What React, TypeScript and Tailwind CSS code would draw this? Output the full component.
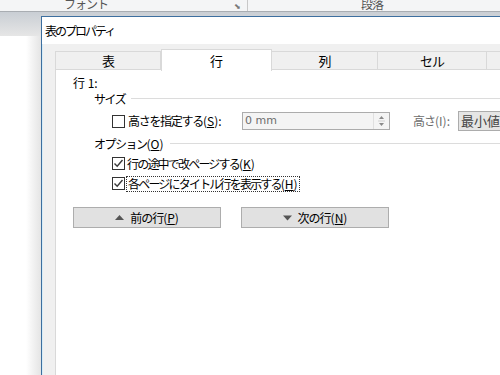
import React from "react";

const font = { fontFamily: '"Noto Sans CJK JP", "Noto Sans", sans-serif' } as React.CSSProperties;

function CheckBox({ checked }: { checked: boolean }) {
  return (
    <div className="w-[13px] h-[13px] border border-[#333333] bg-white flex items-center justify-center shrink-0">
      {checked && (
        <svg width="11" height="11" viewBox="0 0 11 11">
          <path d="M1.5 5.5 L4.2 8.2 L9.5 2" fill="none" stroke="#3a3a3a" strokeWidth="1.4" />
        </svg>
      )}
    </div>
  );
}

function Tab({ label, w, active }: { label: string; w: number; active?: boolean }) {
  if (active) {
    return (
      <div
        className="h-[22px] -mt-[2px] bg-white border border-[#d9d9d9] border-b-0 flex items-center justify-center text-[13px] relative z-10"
        style={{ width: w }}
      >
        {label}
      </div>
    );
  }
  return (
    <div
      className="h-[19px] bg-[#f0f0f0] border border-[#d9d9d9] -ml-px first:ml-0 flex items-center justify-center text-[13px] tracking-[-1px]"
      style={{ width: w }}
    >
      {label}
    </div>
  );
}

export default function App() {
  return (
    <div className="w-[500px] h-[375px] relative overflow-hidden bg-white text-black" style={font}>
      {/* ribbon */}
      <div className="h-[12px] bg-[#f4f5f6] border-b border-[#a9adb2] relative overflow-hidden text-[12px] text-[#555] tracking-[-1px]">
        <span className="absolute left-[64px] -top-[5px]">フォント</span>
        <span className="absolute left-[234px] top-[0px] text-[8px] text-[#777]">⬊</span>
        <div className="absolute left-[247px] top-0 h-[11px] w-px bg-[#c8c8c8]" />
        <span className="absolute left-[361px] -top-[5px]">段落</span>
      </div>
      <div className="h-[24px] bg-gradient-to-b from-[#c9ced4] to-[#e6e6e6]" />
      {/* shadow at left of dialog */}
      <div className="absolute left-[26px] top-[36px] w-[15px] h-[339px] bg-gradient-to-r from-white to-[#e4e4e4]" />

      {/* dialog window */}
      <div className="absolute left-[41px] top-[16px] w-[480px] h-[380px] border-l border-t border-[#3d6f9f] bg-[#f0f0f0] flex flex-col">
        <div className="h-[27px] bg-white flex items-center pl-[3px] text-[12px] tracking-[-2px] shrink-0">表のプロパティ</div>
        <div className="flex-1 flex border-l border-[#d6ecf7]">
          <div className="flex-1 flex flex-col pl-[12px] pt-[7px]">
            <div className="flex items-start h-[18px]">
              <Tab label="表" w={106} />
              <Tab label="行" w={111} active />
              <Tab label="列" w={107} />
              <Tab label="セル" w={110} />
              <Tab label="" w={40} />
            </div>
            <div className="flex-1 bg-white border border-[#d9d9d9] text-[12px] flex flex-col pl-[17px] pt-[4px]">
              <div className="h-[17px] leading-[17px]">行 1:</div>
              <div className="flex items-center h-[15px] pl-[21px]">
                <span className="tracking-[-1.5px]">サイズ</span>
                <div className="flex-1 h-px bg-[#dcdcdc] ml-[6px]" />
              </div>
              <div className="flex items-center h-[20px] mt-[5px] pl-[39px]">
                <CheckBox checked={false} />
                <span className="ml-[3px] w-[114px]">
                  <span className="tracking-[-1.3px]">高さを指定する</span>(<u>S</u>):
                </span>
                <div className="w-[148px] h-[18px] border border-[#acacac] bg-[#f4f4f4] flex items-center">
                  <span className="flex-1 pl-[2px] text-[#6d6d6d]" style={{ fontFamily: '"DejaVu Sans", sans-serif', fontSize: 11 }}>0 mm</span>
                  <div className="w-[16px] h-[16px] flex flex-col items-center justify-center border-l border-[#e0e0e0]">
                    <svg width="7" height="12" viewBox="0 0 7 12">
                      <path d="M3.5 1 L6 4 L1 4 Z" fill="#8a8a8a" />
                      <path d="M0 6 L7 6" stroke="#d0d0d0" strokeWidth="1" />
                      <path d="M1 8 L6 8 L3.5 11 Z" fill="#8a8a8a" />
                    </svg>
                  </div>
                </div>
                <span className="ml-[23px] w-[45px] text-[#6d6d6d]">
                  <span className="tracking-[-1px]">高さ</span>(I):
                </span>
                <div className="w-[60px] h-[20px] border border-[#acacac] bg-[#e5e5e5] flex items-center pl-[2px] text-[13px] text-[#444]">最小値</div>
              </div>
              <div className="flex items-center h-[15px] mt-[5px] pl-[21px]">
                <span>
                  <span className="tracking-[-1.5px]">オプション</span>(<u>O</u>)
                </span>
                <div className="flex-1 h-px bg-[#dcdcdc] ml-[6px]" />
              </div>
              <div className="flex items-center h-[17px] mt-[4px] pl-[39px]">
                <CheckBox checked />
                <span className="ml-[2px]">
                  <span className="tracking-[-1.8px]">行の途中で改ページする</span>(<u>K</u>)
                </span>
              </div>
              <div className="flex items-center h-[17px] mt-[3px] pl-[39px]">
                <CheckBox checked />
                <span className="ml-[1px] px-[1px] border border-dotted border-[#333] leading-[14px]">
                  <span className="tracking-[-1.8px]">各ページにタイトル行を表示する</span>(<u>H</u>)
                </span>
              </div>
              <div className="flex items-center mt-[15px] gap-[20px]">
                <div className="w-[148px] h-[21px] border border-[#adadad] bg-[#e1e1e1] flex items-center justify-center gap-[6px]">
                  <svg width="9" height="6" viewBox="0 0 9 6"><path d="M4.5 0 L9 5 L0 5 Z" fill="#555" /></svg>
                  <span><span className="tracking-[-1px]">前の行</span>(<u>P</u>)</span>
                </div>
                <div className="w-[148px] h-[21px] border border-[#adadad] bg-[#e1e1e1] flex items-center justify-center gap-[6px]">
                  <svg width="9" height="6" viewBox="0 0 9 6"><path d="M0 0.5 L9 0.5 L4.5 5.5 Z" fill="#555" /></svg>
                  <span><span className="tracking-[-1px]">次の行</span>(<u>N</u>)</span>
                </div>
              </div>
            </div>
          </div>
        </div>
      </div>
    </div>
  );
}
